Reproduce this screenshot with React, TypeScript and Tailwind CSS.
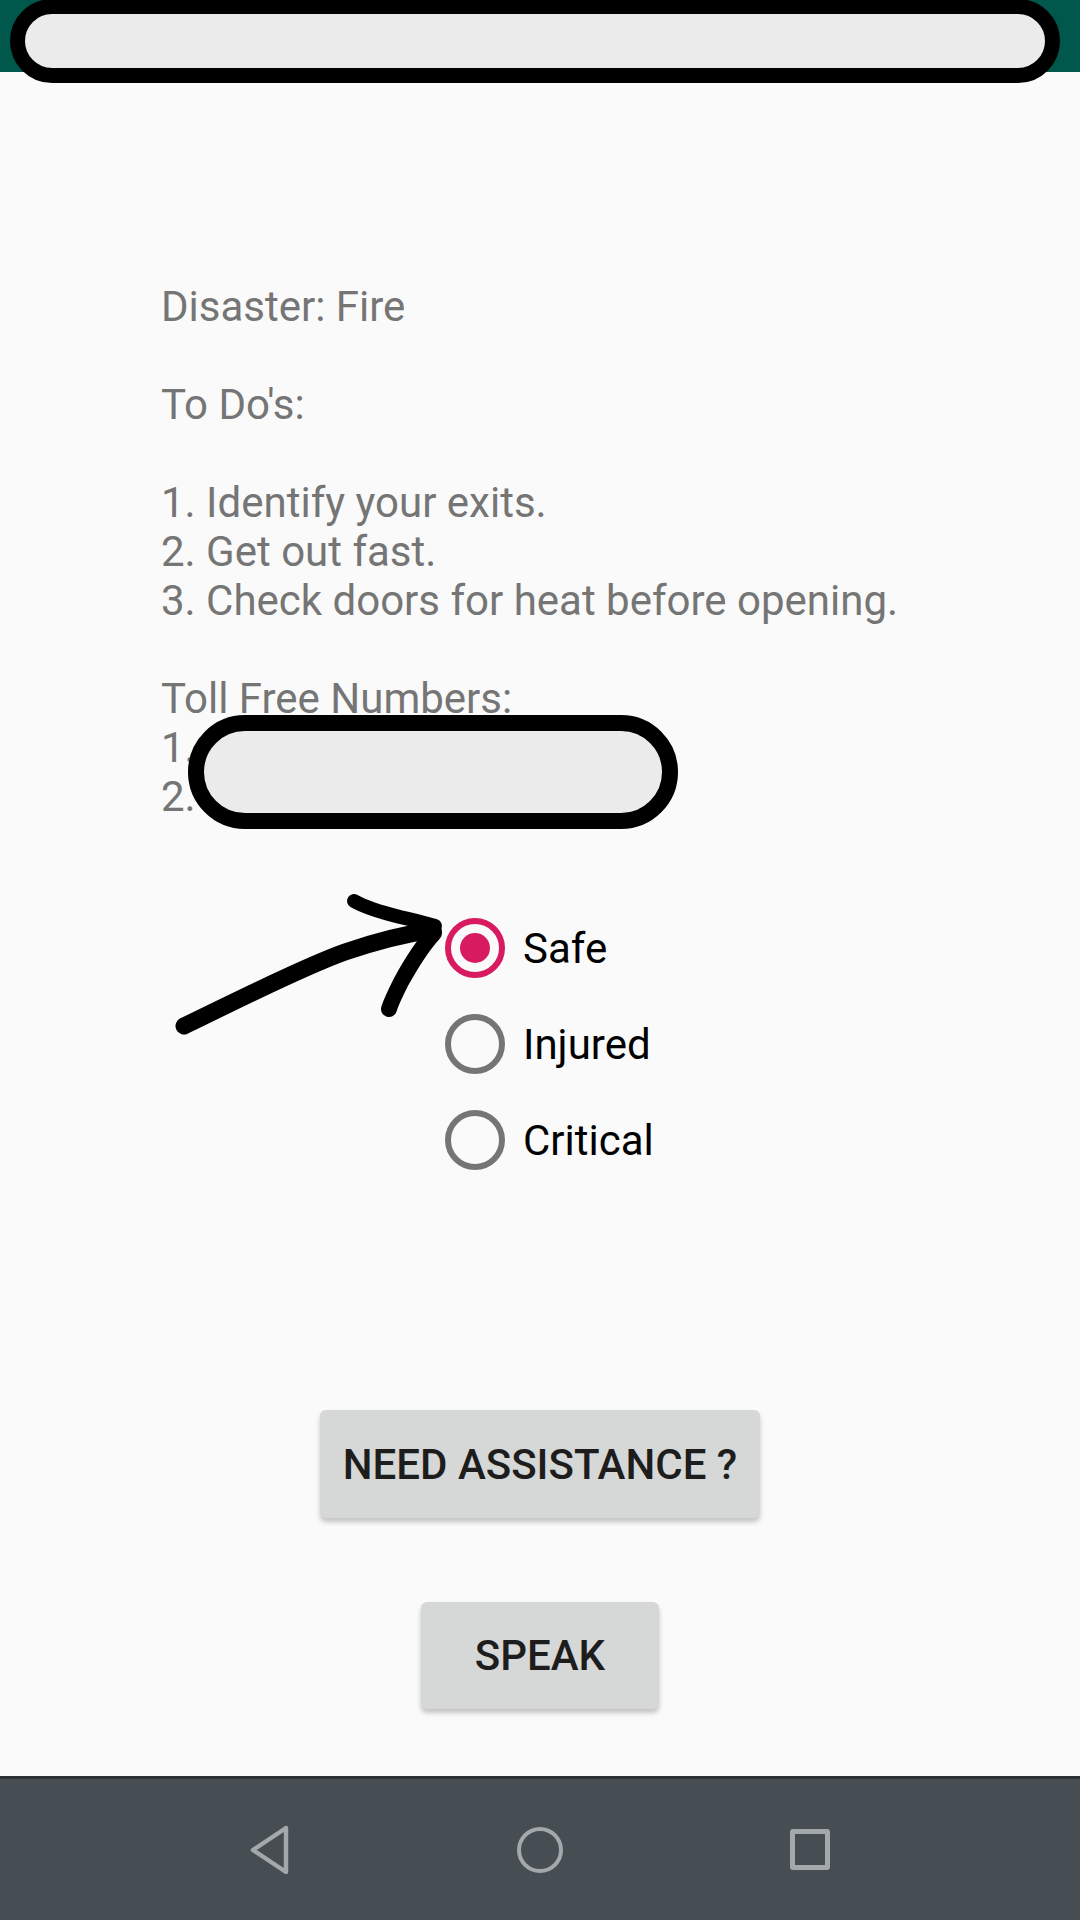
import React, { useState } from 'react'

const lines = [
  'Disaster: Fire',
  '',
  "To Do's:",
  '',
  '1. Identify your exits.',
  '2. Get out fast.',
  '3. Check doors for heat before opening.',
  '',
  'Toll Free Numbers:',
  '1.',
  '2.',
]

const options = ['Safe', 'Injured', 'Critical']

function Radio({ checked }: { checked: boolean }) {
  // android radio: 20dp ring, 2dp stroke, 5dp dot
  return checked ? (
    <div className="w-[60px] h-[60px] rounded-full border-[6px] border-[#D81B60] flex items-center justify-center">
      <div className="w-[30px] h-[30px] rounded-full bg-[#D81B60]" />
    </div>
  ) : (
    <div className="w-[60px] h-[60px] rounded-full border-[6px] border-[#757575]" />
  )
}

export default function App() {
  const [status, setStatus] = useState('Safe')

  return (
    <div className="relative w-[1080px] h-[1920px] bg-[#fafafa] flex flex-col overflow-hidden font-['Roboto',sans-serif]">
      {/* status bar */}
      <div className="h-[72px] bg-[#00574B] shrink-0" />

      {/* main content */}
      <div className="flex-1 flex flex-col">
        <div className="pl-[161px] pt-[210px] text-[42px] leading-[49px] text-[#757575]">
          {lines.map((l, i) => (
            <div key={i} className="h-[49px] whitespace-pre">{l}</div>
          ))}
        </div>

        <div className="pl-[445px] pt-[79px] flex flex-col">
          {options.map((o) => (
            <button
              key={o}
              onClick={() => setStatus(o)}
              className="h-[96px] flex items-center gap-[18px] text-left"
            >
              <Radio checked={status === o} />
              <span className="text-[42px] leading-[49px] text-black">{o}</span>
            </button>
          ))}
        </div>

        <div className="flex flex-col items-center pt-[222px] gap-[84px]">
          <button className="w-[440px] h-[108px] rounded-[6px] bg-[#d6d7d7] shadow-[0_4px_5px_rgba(0,0,0,0.22)] text-[42px] font-medium text-[#1d1d1d]">
            NEED ASSISTANCE ?
          </button>
          <button className="w-[238px] h-[107px] rounded-[6px] bg-[#d6d7d7] shadow-[0_4px_5px_rgba(0,0,0,0.22)] text-[42px] font-medium text-[#1d1d1d]">
            SPEAK
          </button>
        </div>
      </div>

      {/* nav bar */}
      <div className="h-[144px] shrink-0 bg-[#464d53] border-t-[3px] border-[#2b3134] flex justify-center items-center">
        <div className="w-[270px] flex justify-center">
          <svg width="44" height="50" viewBox="0 0 44 50" fill="none" stroke="#a3a8aa" strokeWidth="4.5" strokeLinejoin="round">
            <path d="M38 3 L38 47 L5 25 Z" />
          </svg>
        </div>
        <div className="w-[270px] flex justify-center">
          <div className="w-[46px] h-[46px] rounded-full border-[4.5px] border-[#a3a8aa]" />
        </div>
        <div className="w-[270px] flex justify-center">
          <div className="w-[40px] h-[41px] rounded-[3px] border-[5px] border-[#a3a8aa]" />
        </div>
      </div>

      {/* redaction marks drawn over the screenshot */}
      <div className="absolute left-[10px] top-[-1px] w-[1050px] h-[84px] rounded-full border-[15px] border-black bg-[#ebebeb]" />
      <div className="absolute left-[188px] top-[715px] w-[490px] h-[114px] rounded-full border-[16px] border-black bg-[#ebebeb]" />

      {/* hand-drawn arrow */}
      <svg
        className="absolute left-[170px] top-[885px] pointer-events-none"
        width="280"
        height="160"
        viewBox="170 885 280 160"
        fill="none"
        stroke="black"
        strokeLinecap="round"
        strokeLinejoin="round"
      >
        <path d="M184 1026 C 230 1004, 300 968, 345 952 C 380 940, 405 934, 433 930" strokeWidth="17" />
        <path d="M354 901 C 366 908, 380 912, 400 917 C 415 920, 425 923, 435 926" strokeWidth="14" />
        <path d="M434 933 C 424 944, 412 962, 401 982 C 395 994, 391 1002, 389 1009" strokeWidth="16" />
      </svg>
    </div>
  )
}
